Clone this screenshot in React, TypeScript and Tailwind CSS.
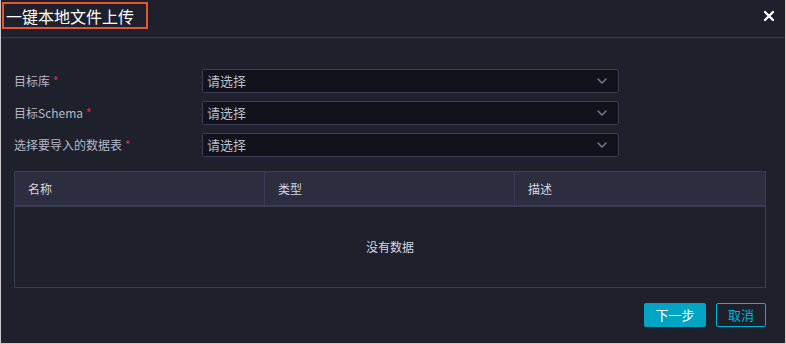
import { ChevronDown, X } from 'lucide-react';

const fields = [
  { label: '目标库' },
  { label: '目标Schema' },
  { label: '选择要导入的数据表' },
];

const columns = ['名称', '类型', '描述'];

function Select() {
  return (
    <div className="flex h-6 w-[417px] items-center justify-between rounded-[2px] border border-[#393c52] bg-[#10121c] pl-1 pr-2">
      <span className="text-[13px] text-[#b9bcc8]">请选择</span>
      <ChevronDown className="h-4 w-4 text-[#7a7e92]" strokeWidth={2} />
    </div>
  );
}

export default function App() {
  return (
    <div
      className="flex h-[344px] w-[786px] flex-col border-x border-b border-[#c9c9c9] bg-[#1e202c]"
      style={{ fontFamily: '"Noto Sans CJK SC", "Noto Sans", sans-serif' }}
    >
      <div className="flex h-[38px] items-start justify-between border-b border-[#3a3d50] pl-[1px] pr-[8px] pt-[2px]">
        <div className="flex h-[27px] items-center border-2 border-[#e8542f] pl-[2px] pr-[12px]">
          <span className="text-[16px] leading-none text-white">一键本地文件上传</span>
        </div>
        <X className="mt-[6px] h-[16px] w-[16px] text-white" strokeWidth={3.5} />
      </div>

      <div className="flex flex-col gap-2 pl-[13px] pt-[31px]">
        {fields.map((f) => (
          <div key={f.label} className="flex items-center">
            <div className="w-[188px] text-[12px] text-[#b4b8c6]">
              {f.label} <span className="text-[#e8262d]">*</span>
            </div>
            <Select />
          </div>
        ))}
      </div>

      <div className="ml-[13px] mr-[19px] mt-[14px] flex h-[117px] flex-col border border-[#393c52]">
        <div className="grid h-[35px] grid-cols-3 border-b-2 border-[#393c52] bg-[#2c2e40]">
          {columns.map((c, i) => (
            <div
              key={c}
              className={`flex items-center pl-[13px] text-[12px] text-[#d4d6e0] ${i < 2 ? 'border-r border-[#393c52]' : ''}`}
            >
              {c}
            </div>
          ))}
        </div>
        <div className="flex flex-1 items-center justify-center text-[12px] text-[#d4d6e0]">没有数据</div>
      </div>

      <div className="mr-[19px] mt-[15px] flex justify-end gap-[10px]">
        <button className="h-[24px] w-[62px] rounded-[2px] bg-[#00a5c3] text-[13px] text-white">下一步</button>
        <button className="h-[24px] w-[50px] rounded-[2px] border border-[#00b4d8] text-[13px] text-[#00b4d8]">取消</button>
      </div>
    </div>
  );
}
